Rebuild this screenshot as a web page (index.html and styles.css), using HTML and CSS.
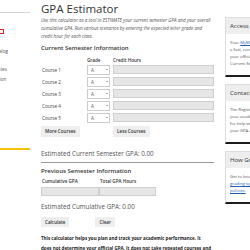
FILE: index.html
```html
<!DOCTYPE html>
<html lang="en">

<head>
    <meta charset="utf-8">
    <meta name="viewport" content="width=device-width, initial-scale=1.0">
    <title>GPA Estimator</title>

    <link rel="stylesheet" href="styles.css">

</head>

<body>
    <div class="page">

        <aside class="side_nav">
            <ul class="nav_group first">
                <li>Registration Status <span class="ext"></span></li>
                <li>Calendar</li>
                <li>Undergraduate Catalog</li>
            </ul>
            <ul class="nav_group">
                <li>Enrollment Certificates</li>
                <li>Transcript Information</li>
            </ul>
            <ul class="nav_group last">
                <li>Academic Advising</li>
                <li>Degree Evaluation</li>
                <li>Tuition and Fees</li>
                <li>Registrar Services</li>
            </ul>
        </aside>

        <main class="calc">
            <h1>GPA Estimator</h1>
            <p class="intro">Use this calculator as a tool to ESTIMATE your current semester GPA and your overall cumulative GPA. Run various scenarios by entering the expected letter grade and credit hour for each class.</p>

            <h2>Current Semester Information</h2>

            <div class="course_grid">
                <span></span>
                <span class="col_head">Grade</span>
                <span class="col_head">Credit Hours</span>

                <span class="course_name">Course 1</span>
                <span class="grade_wrap"><select class="grade"><option>A</option></select></span>
                <input class="hours" type="text">

                <span class="course_name">Course 2</span>
                <span class="grade_wrap"><select class="grade"><option>A</option></select></span>
                <input class="hours" type="text">

                <span class="course_name">Course 3</span>
                <span class="grade_wrap"><select class="grade"><option>A</option></select></span>
                <input class="hours" type="text">

                <span class="course_name">Course 4</span>
                <span class="grade_wrap"><select class="grade"><option>A</option></select></span>
                <input class="hours" type="text">

                <span class="course_name">Course 5</span>
                <span class="grade_wrap"><select class="grade"><option>A</option></select></span>
                <input class="hours" type="text">

                <button class="knap more">More Courses</button>
                <button class="knap less">Less Courses</button>
            </div>

            <p class="result underline">Estimated Current Semester GPA: 0.00</p>

            <h2>Previous Semester Information</h2>

            <div class="prev_grid">
                <span class="col_head">Cumulative GPA</span>
                <span class="col_head">Total GPA Hours</span>
                <input class="hours" type="text">
                <input class="hours" type="text">
            </div>

            <p class="result">Estimated Cumulative GPA: 0.00</p>

            <div class="actions">
                <button class="knap">Calculate</button>
                <button class="knap">Clear</button>
            </div>

            <p class="note">This calculator helps you plan and track your academic performance. It<br>does not determine your official GPA. It does not take repeated courses and grade replacement into account.</p>
        </main>

        <aside class="side_boxes">
            <section class="box">
                <h3>Access Your Records</h3>
                <p>Your <a href="#">MyMSU</a> account offers<br>a fast, convenient way to view<br>your official transcript and<br>Current Student information.</p>
            </section>
            <section class="box">
                <h3>Contact the Registrar</h3>
                <p>The Registrar's Office keeps<br>your academic records. Contact us<br>for help with questions about<br>your GPA and grades.</p>
            </section>
            <section class="box">
                <h3>How Grades Work</h3>
                <p>Get to know our<br><a href="#">grading system</a> and<br><a href="#">policies.</a></p>
            </section>
        </aside>

    </div>
</body></html>
```

FILE: styles.css
```css
html,
body {
    overflow: hidden;
}

body {
    margin: 0;
    background-color: #fff;
    font-family: "Open Sans", "DejaVu Sans", sans-serif;
    color: #444;
}

.page {
    display: flex;
    align-items: flex-start;
    width: 340px;
}

/* left menu, mostly scrolled out of view */

.side_nav {
    flex: none;
    width: 72px;
    margin-left: -42px;
    margin-top: 12px;
    border-top: 1px solid #d6d6d6;
}

.nav_group {
    list-style: none;
    margin: 0;
    padding: 0;
    font-size: 4.6px;
    line-height: 9.5px;
    color: #555;
}

.nav_group.first {
    margin-top: 15px;
}

.nav_group {
    margin-top: 8.5px;
}

.nav_group.last {
    margin-top: 24.5px;
    padding-bottom: 1px;
    border-bottom: 2px solid #f2c200;
}

.nav_group li {
    white-space: nowrap;
}

.ext {
    display: inline-block;
    width: 3px;
    height: 3px;
    border: 0.7px solid #d9262e;
    vertical-align: 0.5px;
}

/* calculator */

.calc {
    flex: none;
    width: 173px;
    margin-left: 11px;
}

h1 {
    margin: 2px 0 0;
    font-size: 11.5px;
    line-height: 14px;
    font-weight: 400;
    color: #333;
}

.intro {
    margin: 0;
    font-size: 4.55px;
    line-height: 8px;
    font-style: italic;
    color: #555;
}

h2 {
    margin: 3.6px 0 0;
    font-size: 6px;
    line-height: 8px;
    font-weight: 600;
    color: #333;
}

.col_head {
    font-size: 4.6px;
    line-height: 8px;
    font-weight: 600;
    color: #333;
}

.course_grid {
    display: grid;
    grid-template-columns: 43px 23px 1fr;
    grid-template-rows: 8px repeat(5, 12px) 13px;
    column-gap: 3px;
    align-items: center;
    margin-top: 4px;
}

.course_grid .col_head {
    align-self: start;
}

.course_name {
    font-size: 4.6px;
    color: #444;
    padding-left: 1px;
}

.grade_wrap {
    position: relative;
    display: block;
    height: 10px;
}

.grade_wrap::after {
    content: "";
    position: absolute;
    right: 2px;
    top: 4px;
    border-left: 1.2px solid transparent;
    border-right: 1.2px solid transparent;
    border-top: 1.5px solid #666;
}

.grade {
    -webkit-appearance: none;
    appearance: none;
    display: block;
    width: 100%;
    height: 10px;
    margin: 0;
    padding: 0 0 0 3px;
    border: 1px solid #ccc;
    border-radius: 0;
    background-color: #fff;
    font-family: inherit;
    font-size: 4.6px;
    color: #555;
    box-sizing: border-box;
}

.hours {
    display: block;
    width: 100%;
    height: 9px;
    margin: 0;
    padding: 0;
    border: 1px solid #cfcfcf;
    border-radius: 0;
    background-color: #e6e6e6;
    box-sizing: border-box;
}

.knap {
    height: 10.5px;
    margin: 0;
    padding: 0 4px;
    border-style: none;
    border-radius: 0;
    background-color: #eee;
    font-family: inherit;
    font-size: 4.6px;
    font-weight: 600;
    color: #333;
}

.course_grid .knap {
    align-self: end;
    justify-self: start;
}

.course_grid .more {
    grid-column: 1 / 3;
}

.result {
    margin: 13px 0 0;
    font-size: 6.3px;
    line-height: 8px;
    color: #555;
}

.result.underline {
    padding-bottom: 4.5px;
    border-bottom: 1px solid #999;
}

.prev_grid {
    display: grid;
    grid-template-columns: 58px 57px;
    grid-template-rows: 8px 8.5px;
    row-gap: 2.3px;
    margin-top: 2.4px;
}

.prev_grid .col_head {
    padding-left: 1px;
}

.prev_grid .hours {
    height: 8.5px;
}

.prev_grid + .result {
    margin-top: 7px;
}

.actions {
    display: flex;
    gap: 26px;
    margin-top: 6px;
}

.note {
    margin: 7px 0 0;
    font-size: 4.5px;
    line-height: 9.5px;
    font-weight: 700;
    color: #222;
}

/* right column boxes */

.side_boxes {
    flex: none;
    width: 85px;
    margin-left: 11px;
    margin-top: 17px;
}

.box {
    margin-bottom: 7px;
    border: 1px solid #ddd;
    border-bottom: 2px solid #1d1d1d;
}

.box h3 {
    margin: 0;
    padding: 0 4px;
    background-color: #eee;
    font-size: 6px;
    line-height: 16px;
    font-weight: 400;
    color: #333;
    white-space: nowrap;
}

.box p {
    margin: 0;
    padding: 5px 4px 8px;
    font-size: 4.2px;
    line-height: 7px;
    color: #555;
    white-space: nowrap;
}

.box a {
    color: #1f5fae;
}
```
